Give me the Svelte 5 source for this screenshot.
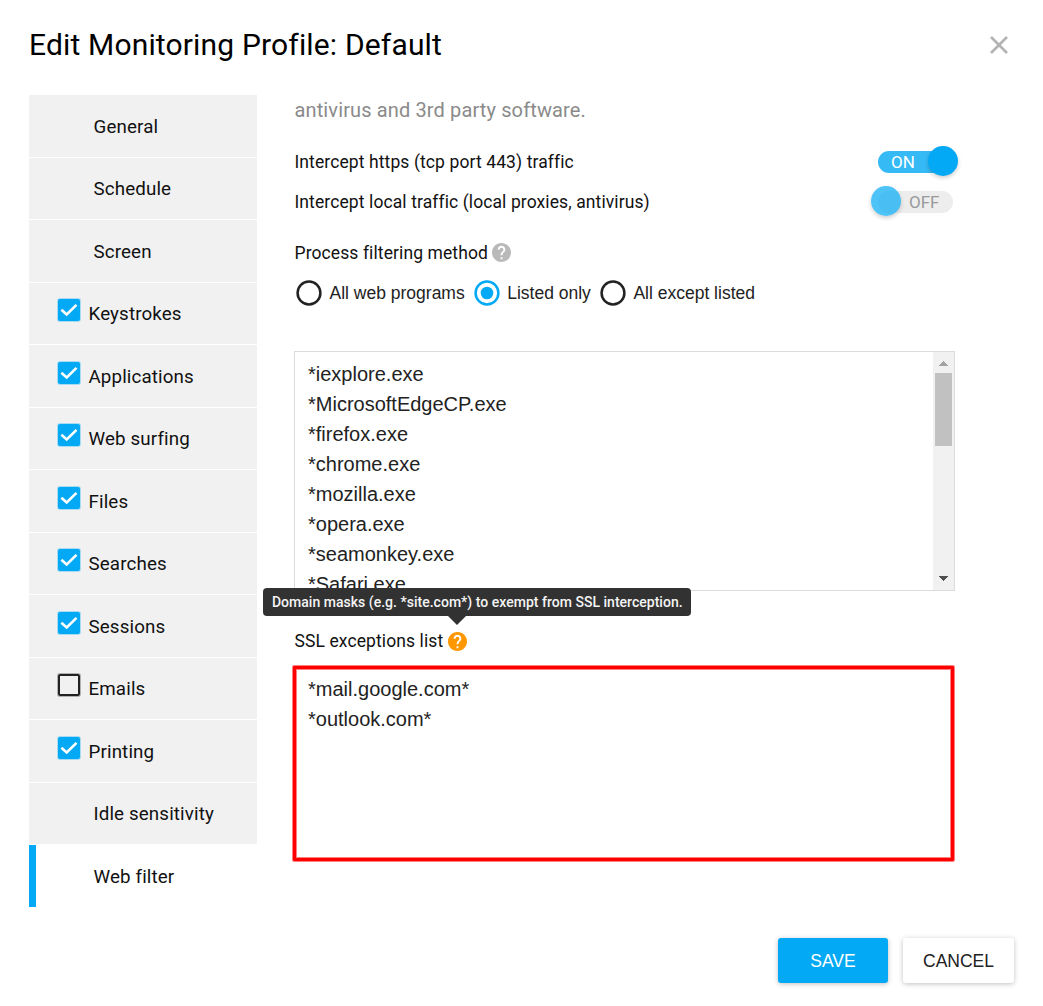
<script lang="ts">
    type Tab = { name: string; checked?: boolean };

    const tabs: Tab[] = [
        { name: "General" },
        { name: "Schedule" },
        { name: "Screen" },
        { name: "Keystrokes", checked: true },
        { name: "Applications", checked: true },
        { name: "Web surfing", checked: true },
        { name: "Files", checked: true },
        { name: "Searches", checked: true },
        { name: "Sessions", checked: true },
        { name: "Emails", checked: false },
        { name: "Printing", checked: true },
        { name: "Idle sensitivity" },
        { name: "Web filter" },
    ];
    const methods = ["All web programs", "Listed only", "All except listed"];
    const programs = [
        "*iexplore.exe",
        "*MicrosoftEdgeCP.exe",
        "*firefox.exe",
        "*chrome.exe",
        "*mozilla.exe",
        "*opera.exe",
        "*seamonkey.exe",
        "*Safari.exe",
    ];
    const exceptions = ["*mail.google.com*", "*outlook.com*"];

    let active = $state("Web filter");
    let method = $state("Listed only");
    let https = $state(true);
    let local = $state(false);
</script>

{#snippet help(kind: string)}
    <svg class="help {kind}" viewBox="2 2 20 20" width="19" height="19">
        <path
            d="M12 2C6.48 2 2 6.48 2 12s4.48 10 10 10 10-4.48 10-10S17.52 2 12 2zm1 17h-2v-2h2v2zm2.07-7.75l-.9.92C13.45 12.9 13 13.5 13 15h-2v-.5c0-1.1.45-2.1 1.17-2.83l1.24-1.26c.37-.36.59-.86.59-1.41 0-1.1-.9-2-2-2s-2 .9-2 2H8c0-2.21 1.79-4 4-4s4 1.79 4 4c0 .88-.36 1.68-.93 2.25z"
        />
    </svg>
{/snippet}

{#snippet toggle(on: boolean, flip: () => void)}
    <div class="toggle {on ? 'on' : ''}" onclick={flip} role="none">
        <span>{on ? "ON" : "OFF"}</span>
        <span class="knob"></span>
    </div>
{/snippet}

<div class="dialog">
    <header>
        <h1>Edit Monitoring Profile: Default</h1>
        <svg class="close" viewBox="0 0 18 18" width="18" height="18">
            <path d="M1 1L17 17M17 1L1 17" />
        </svg>
    </header>

    <main>
        <nav>
            {#each tabs as tab}
                <div
                    class="tab {tab.name === active ? 'active' : ''}"
                    onclick={_ => (active = tab.name)}
                    role="none"
                >
                    {#if tab.checked !== undefined}
                        <div class="check {tab.checked ? 'checked' : ''}">
                            {#if tab.checked}
                                <svg viewBox="0 0 22 22" width="22" height="22">
                                    <path d="M3.4 10.7L8.7 15.5L18.5 5.8" />
                                </svg>
                            {/if}
                        </div>
                    {/if}
                    <span>{tab.name}</span>
                </div>
            {/each}
        </nav>

        <section>
            <p class="note">antivirus and 3rd party software.</p>
            <div class="option">
                <span>Intercept https (tcp port 443) traffic</span>
                {@render toggle(https, () => (https = !https))}
            </div>
            <div class="option">
                <span>Intercept local traffic (local proxies, antivirus)</span>
                {@render toggle(local, () => (local = !local))}
            </div>

            <div class="label process">
                <span>Process filtering method</span>
                {@render help("idle")}
            </div>
            <div class="radios">
                {#each methods as name}
                    <div
                        class="radio {name === method ? 'selected' : ''}"
                        onclick={_ => (method = name)}
                        role="none"
                    >
                        <svg viewBox="0 0 26 26" width="26" height="26">
                            <circle class="ring" cx="13" cy="13" r="11.4" />
                            {#if name === method}
                                <circle class="dot" cx="13" cy="13" r="6.3" />
                            {/if}
                        </svg>
                        <span>{name}</span>
                    </div>
                {/each}
            </div>

            <div class="list programs">
                <div class="lines">
                    {#each programs as line}
                        <div>{line}</div>
                    {/each}
                </div>
                <div class="scrollbar">
                    <svg viewBox="0 0 9 5" width="9" height="5" shape-rendering="crispEdges">
                        <path d="M0 5L4.5 0L9 5z" fill="#a3a3a3" />
                    </svg>
                    <div class="thumb"></div>
                    <svg viewBox="0 0 9 5" width="9" height="5" shape-rendering="crispEdges">
                        <path d="M0 0L4.5 5L9 0z" fill="#505050" />
                    </svg>
                </div>
            </div>

            <div class="label ssl">
                <span>SSL exceptions list</span>
                <div class="anchor">
                    {@render help("hovered")}
                    <div class="tooltip">
                        Domain masks (e.g. *site.com*) to exempt from SSL interception.
                    </div>
                </div>
            </div>
            <div class="list exceptions">
                <div class="lines">
                    {#each exceptions as line}
                        <div>{line}</div>
                    {/each}
                </div>
            </div>
        </section>
    </main>

    <footer>
        <button class="save">SAVE</button>
        <button class="cancel">CANCEL</button>
    </footer>
</div>

<style>
    :global(body) {
        margin: 0;
        background: #fff;
    }

    .dialog {
        box-sizing: border-box;
        width: 1043px;
        height: 1006px;
        padding: 25px 29px 23px;
        display: flex;
        flex-direction: column;
        overflow: hidden;
        font-family: Roboto, sans-serif;
        font-size: 17.5px;
        letter-spacing: 0.1px;
        color: #111;
    }

    header {
        height: 70px;
        display: flex;
        justify-content: space-between;
        align-items: flex-start;
    }

    h1 {
        margin: 0;
        font-size: 30px;
        line-height: 40px;
        font-weight: 400;
        letter-spacing: 0.16px;
        color: #000;
    }

    .close {
        margin: 11px 6px 0 0;
        fill: none;
        stroke: #b3b3b3;
        stroke-width: 2.6;
    }

    main {
        display: flex;
        gap: 37px;
    }

    nav {
        width: 228px;
        flex-shrink: 0;
    }

    .tab {
        box-sizing: border-box;
        height: 62.5px;
        padding-top: 2px;
        padding-left: 64.5px;
        display: flex;
        align-items: center;
        border-bottom: 1px solid #fff;
        background: #f1f1f1;
        font-size: 18.75px;
        letter-spacing: 0.13px;
        cursor: pointer;
    }

    .tab:has(.check) {
        padding-left: 29px;
    }

    .tab.active {
        background: linear-gradient(to right, #03a9f4 7px, #fff 7px);
    }

    .check {
        box-sizing: border-box;
        width: 22px;
        height: 22px;
        margin: 0 8.5px 8px 0;
        border: 2px solid #222;
        border-radius: 2px;
        box-shadow: 0 0 0 1px rgba(34, 34, 34, 0.3);
    }

    .check.checked {
        border: 0;
        background: #03a9f4;
        box-shadow: 0 0 0 1px rgba(3, 169, 244, 0.3);
    }

    .check svg {
        display: block;
        fill: none;
        stroke: #fff;
        stroke-width: 2.6;
    }

    section {
        width: 661px;
    }

    .note {
        margin: 0 0 17px;
        padding-left: 0.5px;
        font-size: 20px;
        line-height: 30px;
        letter-spacing: 0.13px;
        color: #8a8a8a;
    }

    .option {
        height: 40px;
        padding-left: 0.5px;
        display: flex;
        justify-content: space-between;
        align-items: center;
    }

    .toggle {
        position: relative;
        box-sizing: border-box;
        width: 75px;
        height: 22px;
        margin-right: 2px;
        padding-right: 13.5px;
        display: flex;
        align-items: center;
        justify-content: flex-end;
        border-radius: 11px;
        background: #ededed;
        color: #999;
        font-size: 17px;
        letter-spacing: 0;
        cursor: pointer;
    }

    .toggle.on {
        padding: 0 0 0 13px;
        justify-content: flex-start;
        background: #35baf6;
        color: #fff;
    }

    .knob {
        position: absolute;
        top: -5px;
        left: -7px;
        width: 30px;
        height: 30px;
        border-radius: 50%;
        background: rgba(3, 169, 244, 0.7);
        box-shadow: 0 2px 4px rgba(0, 0, 0, 0.2);
    }

    .on .knob {
        left: 50px;
        background: #03a9f4;
    }

    .label {
        padding-left: 0.5px;
        display: flex;
        align-items: center;
        gap: 4px;
    }

    .process {
        height: 24px;
        margin-top: 19px;
    }

    .process .help {
        margin-top: -1px;
    }

    .help {
        display: block;
        fill: #b9b9b9;
    }

    .help.hovered {
        fill: #ff9800;
    }

    .radios {
        height: 26px;
        margin: 15px 0 45px 2px;
        display: flex;
        gap: 9px;
    }

    .radio {
        display: flex;
        align-items: center;
        gap: 7.5px;
        font-family: "Liberation Sans", Arial, sans-serif;
        letter-spacing: 0;
        color: #222;
        cursor: pointer;
    }

    .ring {
        fill: none;
        stroke: #222;
        stroke-width: 2.5;
    }

    .selected .ring {
        stroke: #03a9f4;
    }

    .dot {
        fill: #03a9f4;
    }

    .list {
        box-sizing: border-box;
        display: flex;
        font-family: "Liberation Sans", Arial, sans-serif;
        font-size: 20px;
        line-height: 30px;
        letter-spacing: 0;
        color: #222;
    }

    .lines {
        flex-grow: 1;
        overflow: hidden;
    }

    .programs {
        height: 240px;
        padding-left: 13px;
        border: 1px solid #dcdcdc;
    }

    .programs .lines {
        padding-top: 7px;
    }

    .scrollbar {
        box-sizing: border-box;
        width: 21px;
        padding: 9px 2px;
        display: flex;
        flex-direction: column;
        align-items: center;
        background: #f1f1f1;
    }

    .thumb {
        width: 17px;
        height: 73px;
        margin: 7px 0 auto;
        background: #c1c1c1;
    }

    .ssl {
        height: 24px;
        margin: 38px 0 13px;
        gap: 5px;
    }

    .anchor {
        position: relative;
    }

    .tooltip {
        position: absolute;
        left: -185px;
        bottom: 35px;
        box-sizing: border-box;
        width: 428px;
        height: 28px;
        border-radius: 4px;
        background: #323232;
        color: #f4f4f4;
        font-size: 14px;
        font-weight: 500;
        line-height: 28px;
        letter-spacing: 0.02px;
        text-align: center;
        white-space: nowrap;
    }

    .tooltip::after {
        content: "";
        position: absolute;
        top: 28px;
        left: 185px;
        border: 9px solid transparent;
        border-top-color: #323232;
        border-bottom: 0;
    }

    .exceptions {
        width: 661px;
        height: 195px;
        margin-left: -1px;
        padding: 5px 0 0 12px;
        border: 3px solid #f00;
        border-radius: 1px;
        box-shadow:
            0 0 0 1px rgba(255, 0, 0, 0.5),
            inset 0 0 0 1px rgba(255, 0, 0, 0.5);
    }

    footer {
        margin-top: auto;
        display: flex;
        justify-content: flex-end;
        gap: 15px;
    }

    button {
        width: 111px;
        height: 45px;
        padding: 2px 0 0;
        border: 0;
        border-radius: 3px;
        background: #fff;
        box-shadow: 0 1px 5px rgba(0, 0, 0, 0.25);
        color: #222;
        font-family: "Liberation Sans", Arial, sans-serif;
        font-size: 17.5px;
    }

    .save {
        width: 110px;
        background: #03a9f4;
        color: #fff;
    }
</style>
